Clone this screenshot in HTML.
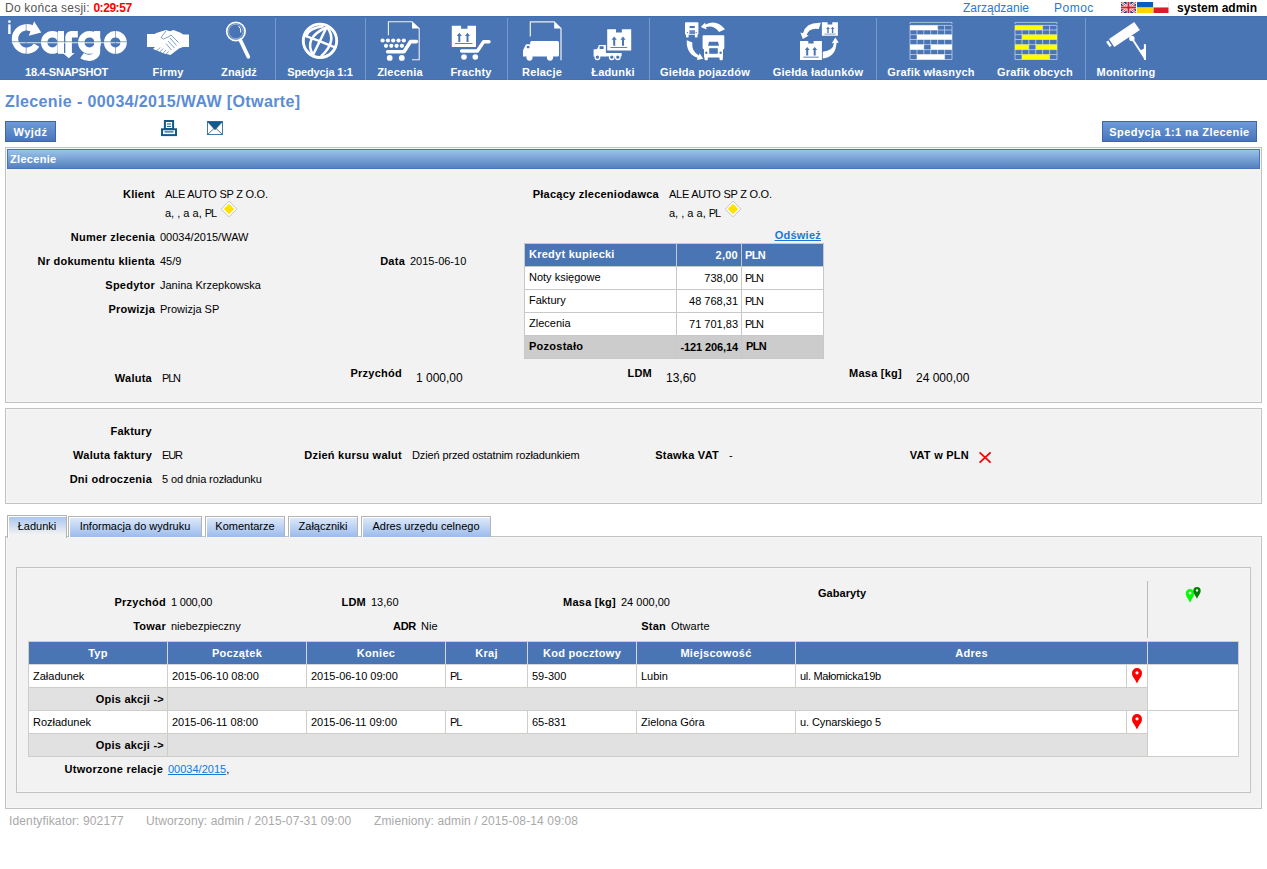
<!DOCTYPE html>
<html lang="pl">
<head>
<meta charset="utf-8">
<title>Zlecenie - 00034/2015/WAW</title>
<style>
*{margin:0;padding:0;box-sizing:border-box}
html,body{width:1267px;height:869px;background:#fff;overflow:hidden}
body{font-family:"Liberation Sans",sans-serif;font-size:11px;line-height:13px;color:#000;position:relative}
.a{position:absolute;white-space:nowrap}
.b{font-weight:bold;letter-spacing:.25px}
.u{letter-spacing:-.25px}
.pln{letter-spacing:-1.2px}
.b.pln{letter-spacing:-.6px}
.r{text-align:right;left:0}
.box{position:absolute;border:1px solid #c2c2c2;background:#f2f2f2;box-shadow:inset 0 0 0 1px #f6f6f6}
#nav{position:absolute;left:0;top:16px;width:1267px;height:64px;background:#4a75b5;box-shadow:inset 0 1px 0 #426eb2,inset 0 -1px 0 #4570b3}
#nav .lab{position:absolute;top:50px;color:#fff;font-weight:bold;font-size:11px;line-height:13px;white-space:nowrap;transform:translateX(-50%);letter-spacing:.2px}
#nav .sep{position:absolute;top:2px;width:1px;height:62px;background:#7698cc}
#nav svg{position:absolute}
.btn{position:absolute;height:21px;border:1px solid #3c66a8;background:linear-gradient(#6f9ad6,#4a76ba);color:#fff;font-weight:bold;font-size:11px;line-height:21px;text-align:center;white-space:nowrap;letter-spacing:.5px}
.hdr{position:absolute;background:linear-gradient(#9ac4e9,#5580c0);border:1px solid #4a75b5;color:#fff;font-size:11px;font-weight:bold;letter-spacing:.3px;line-height:19px;padding-left:2px}
.tab{position:absolute;top:516px;height:21px;border:1px solid #b4b4b4;border-bottom:none;box-shadow:inset 1px 1px 0 #fff;background:linear-gradient(#dfeafb,#9bbbeb);font-size:11px;line-height:19px;text-align:center;white-space:nowrap}
.lnk{color:#1a78d6;text-decoration:underline}
.th{position:absolute;top:642px;height:22px;color:#fff;font-weight:bold;font-size:11px;line-height:23px;text-align:center;border-left:1px solid #d8d6d2;letter-spacing:.3px}
.c{position:absolute;height:23px;background:#fff;border-left:1px solid #cfcdc8;border-bottom:1px solid #cfcdc8;line-height:23px;padding-left:4px;white-space:nowrap}
.g{background:#e1e1e1;text-align:right;padding-right:3px}
</style>
</head>
<body>

<!-- TOP BAR -->
<div class="a" style="left:5px;top:1px;font-size:12px;line-height:15px;color:#555;letter-spacing:.23px">Do końca sesji: <span style="color:#f00;font-weight:bold;letter-spacing:-.45px">0:29:57</span></div>
<div class="a" style="left:963px;top:1px;font-size:12px;line-height:15px;color:#2878d2">Zarządzanie</div>
<div class="a" style="left:1054px;top:1px;font-size:12px;line-height:15px;color:#2878d2;letter-spacing:.5px">Pomoc</div>
<div class="a" style="left:1177px;top:1px;font-size:12px;line-height:15px;font-weight:bold">system admin</div>

<!-- NAV -->
<div id="nav">
  <div class="sep" style="left:275px"></div>
  <div class="sep" style="left:365px"></div>
  <div class="sep" style="left:507px"></div>
  <div class="sep" style="left:649px"></div>
  <div class="sep" style="left:876px"></div>
  <div class="sep" style="left:1085px"></div>
  <div class="lab" style="left:66.5px;letter-spacing:-.25px">18.4-SNAPSHOT</div>
  <div class="lab" style="left:168px">Firmy</div>
  <div class="lab" style="left:239px">Znajdź</div>
  <div class="lab" style="left:320px;letter-spacing:-.15px">Spedycja 1:1</div>
  <div class="lab" style="left:400px">Zlecenia</div>
  <div class="lab" style="left:471px">Frachty</div>
  <div class="lab" style="left:542px">Relacje</div>
  <div class="lab" style="left:613px">Ładunki</div>
  <div class="lab" style="left:705px">Giełda pojazdów</div>
  <div class="lab" style="left:818px">Giełda ładunków</div>
  <div class="lab" style="left:931px">Grafik własnych</div>
  <div class="lab" style="left:1035px">Grafik obcych</div>
  <div class="lab" style="left:1126px">Monitoring</div>
  <svg style="left:0;top:0" width="1267" height="64" viewBox="0 16 1267 64">
<g fill="#fff" stroke="none">
<!-- logo -->
<circle cx="9.4" cy="21.6" r="1.35"/><rect x="8.2" y="24.4" width="2.4" height="9.6"/>
<path d="M34.1 29.9 A11.7 11.7 0 1 0 36.6 45.1" fill="none" stroke="#fff" stroke-width="6.4"/>
<path d="M34.1 21.3 L41.2 32.6 L28.8 35.7 Z"/>
<circle cx="52.4" cy="42.4" r="8.2" fill="none" stroke="#fff" stroke-width="6.4"/><rect x="58" y="31" width="6" height="22.8"/><rect x="57.3" y="31" width=".6" height="23" fill="#4a75b5" opacity=".6"/>
<path d="M65.3 54 V37 a6 6 0 0 1 6 -6 H77.8 V37.6 H71.9 V54 Z"/><path d="M62.8 53 H74.6 L68.8 58.3 Z"/>
<circle cx="89.5" cy="42.4" r="8.2" fill="none" stroke="#fff" stroke-width="6.4"/>
<path d="M97.1 31 V51.5 a7.5 6.3 0 0 1 -7.5 6.3 q-4.5 0 -7.6 -2.2" fill="none" stroke="#fff" stroke-width="6.2"/>
<circle cx="115.4" cy="42.4" r="8.2" fill="none" stroke="#fff" stroke-width="6.4"/>
<rect x="11.7" y="41.5" width="115.1" height="0.9" fill="#4a75b5"/><rect x="11.7" y="42.4" width="115.1" height="0.8"/>
<rect x="25.8" y="23" width="0.6" height="32" fill="#4a75b5"/><rect x="115.2" y="30" width="0.6" height="25" fill="#4a75b5"/>
<!-- handshake -->
<rect x="147" y="34" width="8.5" height="13"/><rect x="182.5" y="34.5" width="6.5" height="12.5"/>
<path d="M155 33.6 L161 31.4 L166 30 L170 31.2 L173.5 30 L180 32.4 L183 34.2 V47 L179 48.6 L170.5 55 L164 53.6 L153 49 L155 47 Z"/>
<g stroke="#4a75b5" stroke-width=".7" fill="none"><path d="M166 31 L161 37.5 L163.5 39 L169 36.5 L171 35 L178.5 42.5"/><path d="M170 38 L176.5 45.5 M168 41 L174.5 48 M166 43.5 L171.5 50"/><path d="M160 47.5 L156.5 51 M163 48.5 L159 53 M166 50 L162.5 54 M168.5 51.5 L165.5 55"/></g>
<!-- magnifier -->
<circle cx="235.9" cy="31.5" r="9.2" fill="none" stroke="#fff" stroke-width="1.7"/><circle cx="235.9" cy="31.5" r="7.3" fill="none" stroke="#fff" stroke-width=".6" opacity=".7"/>
<path d="M238.5 26 q3 2.5 2.2 6.5" fill="none" stroke="#fff" stroke-width="1"/>
<path d="M240.4 40.2 L248.3 56.8" fill="none" stroke="#fff" stroke-width="3.7" stroke-linecap="round"/>
<!-- globe -->
<g fill="none" stroke="#fff" stroke-width="2.5"><circle cx="320" cy="40.8" r="16.7" stroke-width="2.9"/>
<path d="M326.8 26.8 L313 55"/><path d="M327 27 Q338 41 321 56.4"/><path d="M326 27.5 Q303.5 38 312.8 54.5"/>
<path d="M304.5 35.6 Q319 40.5 334.8 47.4"/><path d="M323.5 26 Q308 28.5 306.3 36"/></g>
<!-- zlecenia -->
<path d="M388.4 35.2 V21.8 H412 L419.2 28.6 V59.8 H412" fill="none" stroke="#fff" stroke-width="1.1" opacity=".9"/><path d="M412 21.8 L419.2 28.6 H412 Z"/>
<g><circle cx="382.6" cy="40.5" r="2.1"/><circle cx="387.9" cy="40.5" r="2.1"/><circle cx="393.2" cy="40.5" r="2.1"/><circle cx="398.5" cy="40.5" r="2.1"/><circle cx="403.8" cy="40.5" r="2.1"/>
<circle cx="386" cy="45.8" r="2.1"/><circle cx="391.3" cy="45.8" r="2.1"/><circle cx="396.6" cy="45.8" r="2.1"/><circle cx="401.9" cy="45.8" r="2.1"/></g>
<path d="M387.6 51.7 H404 L410.6 41.6 H416.4" fill="none" stroke="#fff" stroke-width="3.6" stroke-linecap="round" stroke-linejoin="round"/>
<circle cx="389.7" cy="57.9" r="2.9"/><circle cx="401.8" cy="57.9" r="2.9"/>
<!-- frachty -->
<path d="M451.8 25.8 H461.1 V28.8 H467.5 V25.8 H476 V46.9 H451.8 Z"/>
<g fill="#4a75b5"><path d="M458.3 42 V36 H456.7 L459.3 32.8 L461.9 36 H460.3 V42 Z"/><path d="M466.5 42 V36 H464.9 L467.5 32.8 L470.1 36 H468.5 V42 Z"/><rect x="455" y="43.1" width="17.5" height=".9"/></g>
<path d="M461.6 51 H477.4 L483.6 41.7 H489" fill="none" stroke="#fff" stroke-width="3.4" stroke-linecap="round" stroke-linejoin="round"/>
<circle cx="464" cy="57" r="2.8"/><circle cx="475.3" cy="57" r="2.8"/>
<!-- relacje -->
<path d="M530.3 36.6 V21.8 H554.2 L561 28.4 V60.2" fill="none" stroke="#fff" stroke-width="1.2" opacity=".9"/><path d="M554.2 21.8 L561 28.4 H554.2 Z"/>
<rect x="530.2" y="41" width="28.8" height="15.6" rx="1.5"/><path d="M531 44.2 H526 L523 50.2 V56.6 H531 Z"/><rect x="526.8" y="46" width="2.6" height="2.2" fill="#4a75b5"/>
<circle cx="529.5" cy="57.6" r="3.1"/><circle cx="550" cy="57.6" r="3.1"/>
<!-- ladunki -->
<path d="M607.2 29.3 H616 V32.5 H621.9 V29.3 H631.2 V50.6 H607.2 Z"/>
<g fill="#4a75b5"><path d="M613.2 45.8 V39.8 H611.6 L614.2 36.6 L616.8 39.8 H615.2 V45.8 Z"/><path d="M622 45.8 V39.8 H620.4 L623 36.6 L625.6 39.8 H624 V45.8 Z"/><rect x="610.4" y="47" width="16.8" height=".9"/></g>
<path d="M593.6 56.6 V49.6 L597.2 49 L599 45 H605.9 V56.6 Z"/><rect x="599.6" y="46.2" width="4" height="2.8" fill="#4a75b5"/><rect x="605" y="53" width="16.6" height="3.4"/>
<g stroke="#fff" stroke-width="1.3" fill="#4a75b5"><circle cx="597.4" cy="57.2" r="2.3"/><circle cx="611.8" cy="57.2" r="2.3"/><circle cx="617.8" cy="57.2" r="2.3"/></g>
<!-- gielda pojazdow -->
<rect x="685" y="22.2" width="13.4" height="12.6" rx="1"/><rect x="686" y="34" width="2.6" height="3.4"/><rect x="694.9" y="34" width="2.6" height="3.4"/>
<g fill="#4a75b5"><rect x="689.6" y="26" width="5.2" height="2.1"/><rect x="689.4" y="30.2" width="5.6" height="3.8" opacity=".85"/><circle cx="687.5" cy="32.6" r=".7"/><circle cx="696.2" cy="32.6" r=".7"/></g>
<rect x="702.6" y="35.2" width="21.7" height="14" rx="1.2"/><rect x="704" y="40" width="19" height="17.6" rx="1"/><rect x="704.5" y="56" width="3.3" height="4.3" rx="1"/><rect x="719.5" y="56" width="3.3" height="4.3" rx="1"/>
<g fill="#4a75b5"><path d="M709 41.8 H718 L719 45.8 H708 Z"/><rect x="709.2" y="48.2" width="8.6" height="5.6"/><circle cx="706.3" cy="52.7" r="1.2"/><circle cx="720.6" cy="52.7" r="1.2"/></g>
<path d="M700.8 27 L705.2 22.4 L705.4 24.6 Q716.5 18.5 725 29.2 L719.2 31.9 Q713 24.8 706 27.2 L706.6 29.4 Z"/>
<path d="M686.8 40.3 L692.3 42.6 Q691.5 52 698.9 55.4 L699.6 53.2 L703.2 58.7 L696.9 60.1 L697.6 57.8 Q686 54 686.8 40.3 Z"/>
<!-- gielda ladunkow -->
<path d="M821.9 22.2 H827.6 V24.4 H832.3 V22.2 H837.9 V35.7 H821.9 Z"/>
<g fill="#4a75b5"><path d="M827.3 33 V29 H826.2 L828 26.7 L829.8 29 H828.7 V33 Z"/><path d="M831.9 33 V29 H830.8 L832.6 26.7 L834.4 29 H833.3 V33 Z"/><rect x="824.5" y="33.7" width="11" height=".7"/></g>
<path d="M800 41 H808.3 V43.4 H813.6 V41 H821.9 V59.9 H800 Z"/>
<g fill="#4a75b5"><path d="M806.2 55.6 V50 H804.7 L807.2 47 L809.7 50 H808.2 V55.6 Z"/><path d="M813.7 55.6 V50 H812.2 L814.7 47 L817.2 50 H815.7 V55.6 Z"/><rect x="803.2" y="56.7" width="15.5" height=".9"/></g>
<path d="M820.8 22.8 L818.8 29 Q809.2 27.4 806.6 35 L808.8 35.6 L802.8 38.9 L800.4 32.4 L803 33.2 Q806 22 820.8 22.8 Z"/>
<path d="M822.8 58.6 V51.8 Q833 51 834 43.1 L831.7 43.4 L835.3 37.6 L838.7 42.6 L836.5 42.9 Q836 56.5 822.8 58.6 Z"/>
<!-- grafik wlasnych -->
<g id="grid" fill="none" stroke="#fff" stroke-width=".7" opacity=".75">
<path d="M910 24 V22.4 H952 V24"/>
<path d="M910 25.4 H952 M910 30 H952 M910 34.7 H952 M910 39.5 H952 M910 44.6 H952 M910 49.6 H952 M910 54.5 H952 M910 59.5 H952"/>
<path d="M910 25.4 V59.5 M917 25.4 V59.5 M923.8 25.4 V59.5 M930.7 25.4 V59.5 M937.6 25.4 V59.5 M944.6 25.4 V59.5 M952 25.4 V59.5"/></g>
<rect x="910" y="25.4" width="27.6" height="4.6"/><rect x="917" y="34.7" width="35" height="4.8"/><rect x="910" y="44.6" width="13.8" height="5"/><rect x="931" y="44.6" width="21" height="5"/><rect x="917" y="54.5" width="27.6" height="5"/>
<!-- grafik obcych -->
<use href="#grid" x="105"/>
<g fill="#ff0"><rect x="1015" y="25.4" width="27.6" height="4.6"/><rect x="1022" y="34.7" width="35" height="4.8"/><rect x="1015" y="44.6" width="13.8" height="5"/><rect x="1036" y="44.6" width="21" height="5"/><rect x="1022" y="54.5" width="27.6" height="5"/></g>
<!-- camera -->
<path d="M1134.2 22.1 L1139.9 29.9 L1114.3 47.1 L1109 38.9 Z"/><path d="M1108.3 40.4 L1111.7 45.7 L1109.6 47.1 L1106.1 41.9 Z"/>
<circle cx="1131.9" cy="38.4" r="2.7"/><path d="M1132 38.5 L1144.6 57.8" stroke="#fff" stroke-width="1.9" fill="none"/>
<rect x="1143.9" y="44.2" width="2.1" height="15.8"/><path d="M1144 48.5 V58 L1140 50.8 Z"/>
</g>
</svg>

</div>

<!-- TITLE -->
<div class="a b" style="left:5px;top:92px;font-size:16px;line-height:20px;color:#5b8cd6;letter-spacing:.39px">Zlecenie - 00034/2015/WAW [Otwarte]</div>

<!-- BUTTONS -->
<div class="btn" style="left:5px;top:121px;width:51px">Wyjdź</div>
<div class="btn" style="left:1102px;top:121px;width:155px;letter-spacing:.42px">Spedycja 1:1 na Zlecenie</div>
<svg class="a" style="left:1121px;top:2px" width="48" height="11" viewBox="0 0 48 11">
<rect x="0" y="0" width="15" height="11" fill="#1f2f7a"/>
<path d="M0 0 L15 11 M15 0 L0 11" stroke="#fff" stroke-width="2.4"/><path d="M0 0 L15 11 M15 0 L0 11" stroke="#d0202a" stroke-width=".9"/>
<path d="M7.5 0 V11 M0 5.5 H15" stroke="#fff" stroke-width="3.6"/><path d="M7.5 0 V11 M0 5.5 H15" stroke="#d0202a" stroke-width="2"/>
<rect x="16" y="0" width="16" height="5.5" fill="#0a5bc4"/><rect x="16" y="5.5" width="16" height="5.5" fill="#ffd500"/>
<rect x="32.5" y="0" width="15" height="5.5" fill="#fff" stroke="#ddd" stroke-width=".5"/><rect x="32.5" y="5.5" width="15" height="5.5" fill="#dc1c2c"/>
</svg>
<svg class="a" style="left:160px;top:119px" width="66" height="18" viewBox="160 119 66 18">
<g fill="none" stroke="#0f5a8a">
<rect x="164.9" y="121" width="8.2" height="8" stroke-width="2" fill="#fff"/><path d="M167 124 H171 M167 126.4 H171" stroke-width="1"/>
<rect x="162" y="129.3" width="14" height="5.8" stroke-width="2" fill="#fff"/><path d="M164.5 131.9 H173.5" stroke-width="1.2"/>
<rect x="207.5" y="121.7" width="15" height="12.8" stroke-width=".8" fill="#fff"/><path d="M207.5 134.5 L215 127.5 L222.5 134.5" stroke-width=".8"/>
<path d="M207.5 121.7 H222.5 L215 129.8 Z" fill="#0f5a8a" stroke-width=".6"/></g>
</svg>

<!-- PANEL 1 -->
<div class="box" style="left:5px;top:147px;width:1257px;height:256px"></div>
<div class="hdr" style="left:7px;top:149px;width:1253px;height:20px">Zlecenie</div>

<div class="a b r" style="top:188px;width:155px">Klient</div>
<div class="a u" style="left:165px;top:188px">ALE AUTO SP Z O.O.</div>
<div class="a" style="left:165px;top:207px">a, , a a, <span class="pln">PL</span></div>
<svg class="a" style="left:220px;top:200px" width="18" height="18" viewBox="0 0 18 18"><path d="M9 1.2 L16.8 9 L9 16.8 L1.2 9 Z" fill="#fff" stroke="#b4b4b4" stroke-width=".8"/><path d="M9 3.8 L14.2 9 L9 14.2 L3.8 9 Z" fill="#ffe100"/></svg>
<svg class="a" style="left:724px;top:200px" width="18" height="18" viewBox="0 0 18 18"><path d="M9 1.2 L16.8 9 L9 16.8 L1.2 9 Z" fill="#fff" stroke="#b4b4b4" stroke-width=".8"/><path d="M9 3.8 L14.2 9 L9 14.2 L3.8 9 Z" fill="#ffe100"/></svg>
<div class="a b r" style="top:231px;width:155px">Numer zlecenia</div>
<div class="a" style="left:160px;top:231px">00034/2015/WAW</div>
<div class="a b r" style="top:255px;width:155px">Nr dokumentu klienta</div>
<div class="a" style="left:160px;top:255px">45/9</div>
<div class="a b r" style="top:255px;width:405px">Data</div>
<div class="a" style="left:410px;top:255px">2015-06-10</div>
<div class="a b r" style="top:279px;width:155px">Spedytor</div>
<div class="a" style="left:160px;top:279px">Janina Krzepkowska</div>
<div class="a b r" style="top:303px;width:155px">Prowizja</div>
<div class="a" style="left:160px;top:303px">Prowizja SP</div>
<div class="a b r" style="top:372px;width:152px">Waluta</div>
<div class="a pln" style="left:162px;top:372px">PLN</div>
<div class="a b r" style="top:367px;width:402px">Przychód</div>
<div class="a" style="left:416px;top:372px;font-size:12px">1 000,00</div>
<div class="a b r" style="top:367px;width:652px">LDM</div>
<div class="a" style="left:666px;top:372px;font-size:12px">13,60</div>
<div class="a b r" style="top:367px;width:902px">Masa [kg]</div>
<div class="a" style="left:916px;top:372px;font-size:12px">24 000,00</div>

<div class="a b r" style="top:188px;width:659px">Płacący zleceniodawca</div>
<div class="a u" style="left:669px;top:188px">ALE AUTO SP Z O.O.</div>
<div class="a" style="left:669px;top:207px">a, , a a, <span class="pln">PL</span></div>
<div class="a b r lnk" style="top:229px;width:821px">Odśwież</div>

<!-- credit table -->
<div class="a" style="left:524px;top:243px;width:300px;height:116px;background:#fff;border:1px solid #c8c8c8"></div>
<div class="a" style="left:525px;top:244px;width:298px;height:22px;background:#4a75b5"></div>
<div class="a" style="left:525px;top:336px;width:298px;height:22px;background:#ccc"></div>
<div class="a" style="left:525px;top:266px;width:298px;height:1px;background:#c8c8c8"></div>
<div class="a" style="left:525px;top:289px;width:298px;height:1px;background:#c8c8c8"></div>
<div class="a" style="left:525px;top:312px;width:298px;height:1px;background:#c8c8c8"></div>
<div class="a" style="left:525px;top:335px;width:298px;height:1px;background:#c8c8c8"></div>
<div class="a" style="left:676px;top:244px;width:1px;height:114px;background:#c8c8c8"></div>
<div class="a" style="left:741px;top:244px;width:1px;height:114px;background:#c8c8c8"></div>
<div class="a b" style="left:529px;top:248px;color:#fff">Kredyt kupiecki</div>
<div class="a b r" style="top:249px;width:738px;color:#fff">2,00</div>
<div class="a b pln" style="left:745px;top:249px;color:#fff">PLN</div>
<div class="a" style="left:529px;top:271px">Noty księgowe</div>
<div class="a r" style="top:272px;width:738px">738,00</div>
<div class="a pln" style="left:745px;top:272px">PLN</div>
<div class="a" style="left:529px;top:294px">Faktury</div>
<div class="a r" style="top:295px;width:738px">48 768,31</div>
<div class="a pln" style="left:745px;top:295px">PLN</div>
<div class="a" style="left:529px;top:317px">Zlecenia</div>
<div class="a r" style="top:318px;width:738px">71 701,83</div>
<div class="a pln" style="left:745px;top:318px">PLN</div>
<div class="a b" style="left:529px;top:340px">Pozostało</div>
<div class="a b r" style="top:341px;width:738px;letter-spacing:-.1px">-121 206,14</div>
<div class="a b pln" style="left:746px;top:340px">PLN</div>

<!-- PANEL 2 -->
<div class="box" style="left:5px;top:408px;width:1257px;height:96px"></div>
<div class="a b r" style="top:425px;width:152px">Faktury</div>
<div class="a b r" style="top:449px;width:152px">Waluta faktury</div>
<div class="a pln" style="left:162px;top:449px">EUR</div>
<div class="a b r" style="top:473px;width:152px">Dni odroczenia</div>
<div class="a" style="left:162px;top:473px;letter-spacing:-.12px">5 od dnia rozładunku</div>
<div class="a b r" style="top:449px;width:402px">Dzień kursu walut</div>
<div class="a" style="left:412px;top:449px;letter-spacing:-.13px">Dzień przed ostatnim rozładunkiem</div>
<div class="a b r" style="top:449px;width:719px">Stawka VAT</div>
<div class="a" style="left:729px;top:449px">-</div>
<div class="a b r" style="top:449px;width:969px">VAT w PLN</div>

<svg class="a" style="left:977px;top:450px" width="16" height="15" viewBox="977 450 16 15"><path d="M979.6 452.4 L990.6 462.6 M990.6 452.4 L979.6 462.6" stroke="#f00" stroke-width="1.8" fill="none"/></svg>

<!-- TABS -->
<div class="box" style="left:5px;top:536px;width:1257px;height:273px"></div>
<div class="tab" style="left:7px;top:515px;width:60px;height:23px;line-height:21px;background:linear-gradient(#a6c4ee,#f2f2f2 85%)">Ładunki</div>
<div class="tab" style="left:68px;width:134px">Informacja do wydruku</div>
<div class="tab" style="left:205px;width:80px">Komentarze</div>
<div class="tab" style="left:288px;width:70px">Załączniki</div>
<div class="tab" style="left:361px;width:130px">Adres urzędu celnego</div>

<!-- INNER PANEL -->
<div class="box" style="left:16px;top:567px;width:1235px;height:226px"></div>
<div class="a b r" style="top:596px;width:166px">Przychód</div>
<div class="a" style="left:171px;top:596px;letter-spacing:-.2px">1 000,00</div>
<div class="a b r" style="top:596px;width:366px">LDM</div>
<div class="a" style="left:371px;top:596px">13,60</div>
<div class="a b r" style="top:596px;width:616px">Masa [kg]</div>
<div class="a" style="left:621px;top:596px">24 000,00</div>
<div class="a b" style="left:818px;top:587px;letter-spacing:.05px">Gabaryty</div>
<div class="a b r" style="top:620px;width:166px">Towar</div>
<div class="a" style="left:171px;top:620px">niebezpieczny</div>
<div class="a b r" style="top:620px;width:416px;letter-spacing:-.3px">ADR</div>
<div class="a" style="left:421px;top:620px">Nie</div>
<div class="a b r" style="top:620px;width:666px">Stan</div>
<div class="a" style="left:671px;top:620px">Otwarte</div>
<div class="a" style="left:1147px;top:581px;width:1px;height:57px;background:#bcbcbc"></div>

<!-- main table -->
<div class="a" style="left:28px;top:641px;width:1211px;height:116px;background:#fff;border:1px solid #cfcdc8"></div>
<div class="a" style="left:29px;top:642px;width:1209px;height:22px;background:#4a75b5"></div>
<div class="a" style="left:29px;top:664px;width:1209px;height:1px;background:#d8d6d2"></div>
<div class="th" style="left:29px;width:138px;border-left:none">Typ</div>
<div class="th" style="left:167px;width:139px">Początek</div>
<div class="th" style="left:306px;width:139px">Koniec</div>
<div class="th" style="left:445px;width:82px">Kraj</div>
<div class="th" style="left:527px;width:109px">Kod pocztowy</div>
<div class="th" style="left:636px;width:159px">Miejscowość</div>
<div class="th" style="left:795px;width:352px">Adres</div>
<div class="th" style="left:1147px;width:91px"></div>

<div class="c" style="left:28px;top:665px;width:139px">Załadunek</div>
<div class="c" style="left:167px;top:665px;width:139px">2015-06-10 08:00</div>
<div class="c" style="left:306px;top:665px;width:139px">2015-06-10 09:00</div>
<div class="c pln" style="left:445px;top:665px;width:82px">PL</div>
<div class="c" style="left:527px;top:665px;width:109px">59-300</div>
<div class="c" style="left:636px;top:665px;width:159px">Lubin</div>
<div class="c" style="left:795px;top:665px;width:331px;letter-spacing:-.3px">ul. Małomicka19b</div>
<div class="c" style="left:1126px;top:665px;width:21px"></div>
<div class="c b g" style="left:28px;top:688px;width:139px">Opis akcji -&gt;</div>
<div class="c g" style="left:167px;top:688px;width:980px"></div>
<div class="c" style="left:28px;top:711px;width:139px">Rozładunek</div>
<div class="c" style="left:167px;top:711px;width:139px">2015-06-11 08:00</div>
<div class="c" style="left:306px;top:711px;width:139px">2015-06-11 09:00</div>
<div class="c pln" style="left:445px;top:711px;width:82px">PL</div>
<div class="c" style="left:527px;top:711px;width:109px">65-831</div>
<div class="c" style="left:636px;top:711px;width:159px">Zielona Góra</div>
<div class="c" style="left:795px;top:711px;width:331px;letter-spacing:-.1px">u. Cynarskiego 5</div>
<div class="c" style="left:1126px;top:711px;width:21px"></div>
<div class="c b g" style="left:28px;top:734px;width:139px">Opis akcji -&gt;</div>
<div class="c g" style="left:167px;top:734px;width:980px"></div>
<div class="a" style="left:1147px;top:665px;width:1px;height:91px;background:#cfcdc8"></div>
<div class="a" style="left:1148px;top:710px;width:90px;height:1px;background:#cfcdc8"></div>

<div class="a b r" style="top:763px;width:163px">Utworzone relacje</div>
<div class="a" style="left:168px;top:763px"><span class="lnk">00034/2015</span>,</div>

<svg class="a" style="left:1181.9px;top:588.1px" width="16" height="16" viewBox="1181.9 588.1 16 16"><path d="M1189.9 602.9 C1187.5625 597.6560000000001 1185.65 596.5375 1185.65 593.35 A4.25 4.25 0 1 1 1194.15 593.35 C1194.15 596.5375 1192.2375000000002 597.6560000000001 1189.9 602.9 Z" fill="#00ff00"/><circle cx="1189.9" cy="593.15" r="1.36" fill="#fff"/></svg>
<svg class="a" style="left:1189.3px;top:586.1px" width="16" height="14" viewBox="1189.3 586.1 16 14"><path d="M1197.3 598.8000000000001 C1195.2925 594.354 1193.6499999999999 593.4875 1193.6499999999999 590.75 A3.65 3.65 0 1 1 1200.95 590.75 C1200.95 593.4875 1199.3075 594.354 1197.3 598.8000000000001 Z" fill="#008000"/><circle cx="1197.3" cy="590.55" r="1.168" fill="#fff"/></svg>
<svg class="a" style="left:1128.9px;top:667px" width="16" height="18" viewBox="1128.9 667 16 18"><path d="M1136.9 683.4 C1134.15 677.548 1131.9 676.75 1131.9 673.0 A5.0 5.0 0 1 1 1141.9 673.0 C1141.9 676.75 1139.65 677.548 1136.9 683.4 Z" fill="#ff0000"/><circle cx="1136.9" cy="672.8" r="1.6" fill="#fff"/></svg>
<svg class="a" style="left:1128.9px;top:713px" width="16" height="18" viewBox="1128.9 713 16 18"><path d="M1136.9 729.4 C1134.15 723.548 1131.9 722.75 1131.9 719.0 A5.0 5.0 0 1 1 1141.9 719.0 C1141.9 722.75 1139.65 723.548 1136.9 729.4 Z" fill="#ff0000"/><circle cx="1136.9" cy="718.8" r="1.6" fill="#fff"/></svg>

<!-- FOOTER -->
<div class="a" style="left:9px;top:814px;font-size:12px;line-height:15px;color:#a9a9a9;letter-spacing:.13px">Identyfikator: 902177</div>
<div class="a" style="left:146px;top:814px;font-size:12px;line-height:15px;color:#a9a9a9;letter-spacing:.13px">Utworzony: admin / 2015-07-31 09:00</div>
<div class="a" style="left:374px;top:814px;font-size:12px;line-height:15px;color:#a9a9a9;letter-spacing:.13px">Zmieniony: admin / 2015-08-14 09:08</div>

</body>
</html>
